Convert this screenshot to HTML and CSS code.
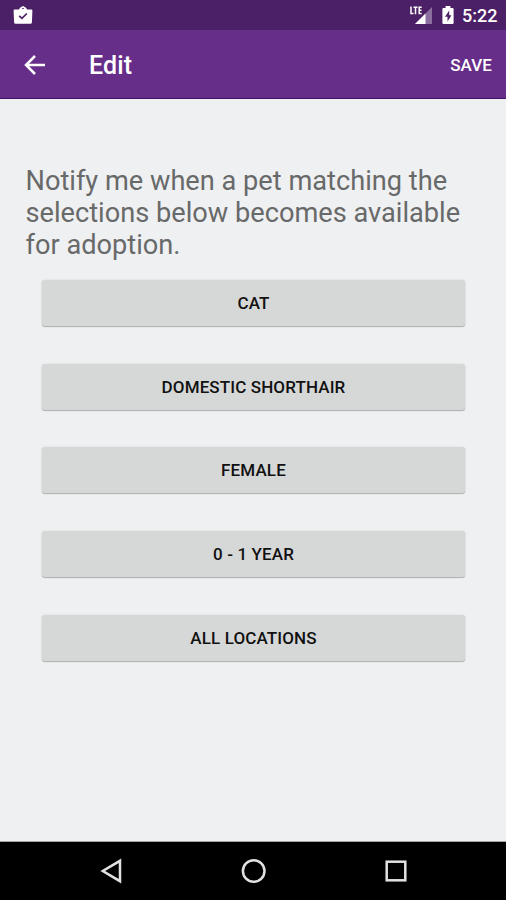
FILE: index.html
```html
<!DOCTYPE html>
<html lang="en">
<head>
<meta charset="utf-8">
<title>Edit</title>
<link rel="stylesheet" href="styles.css">
</head>
<body>
<div class="screen">
  <div class="status">
    <svg class="work" width="20" height="20" viewBox="0 0 20 20"><path fill="#fff" fill-rule="evenodd" d="M1.800 4.500h4.200L7 2.800 10 1l3 1.800 1 1.700h4.200a1.200 1.200 0 0 1 1.200 1.300l-.5 11.500a1.500 1.500 0 0 1-1.500 1.500H2.600a1.500 1.500 0 0 1-1.500-1.500L.6 5.800a1.200 1.200 0 0 1 1.200-1.300zM8.600 4h2.800L10 2.800z"/><path d="M6.200 10.800l2.700 2.600 5-4.900" fill="none" stroke="#4c2066" stroke-width="1.700"/></svg>
    <div class="indicators">
      <svg class="signal" width="24" height="20" viewBox="0 0 24 20"><path d="M22 2v17H5z" fill="#8d6f9f"/><path d="M15.500 8.500V19H5z" fill="#fff"/><path d="M1 1.500v7H3.500M3.500 2.200h4M5.500 2.200v7M11.700 2.200H9.200v6.300h2.500M9.200 5.300h2.300" fill="none" stroke="#fff" stroke-width="1.500"/></svg>
      <svg class="battery" width="12" height="20" viewBox="0 0 12 20"><path d="M3.600 1h4.800v2h2.200a1 1 0 0 1 1 1v14a1 1 0 0 1-1 1H1.400a1 1 0 0 1-1-1V4a1 1 0 0 1 1-1h2.200z" fill="#fff"/><path d="M7.200 5.500L3 11.800h2.500v4.700l4-6.300H7.200z" fill="#4c2066"/></svg>
      <span class="clock">5:22</span>
    </div>
  </div>
  <header class="appbar">
    <svg class="back" width="22" height="22" viewBox="0 0 22 22"><path d="M21 11H3M11 2l-9 9 9 9" fill="none" stroke="#fff" stroke-width="2.500"/></svg>
    <h1 class="title">Edit</h1>
    <span class="save">SAVE</span>
  </header>
  <main class="content">
    <p class="message">Notify me when a pet matching the selections below becomes available for adoption.</p>
    <div class="choices">
      <button class="choice">CAT</button>
      <button class="choice">DOMESTIC SHORTHAIR</button>
      <button class="choice">FEMALE</button>
      <button class="choice">0 - 1 YEAR</button>
      <button class="choice">ALL LOCATIONS</button>
    </div>
  </main>
  <nav class="navbar">
    <svg width="26" height="26" viewBox="0 0 26 26"><path d="M22 2.800v20.400L4.800 13z"/></svg>
    <svg width="26" height="26" viewBox="0 0 26 26"><circle cx="12.700" cy="13" r="10.800"/></svg>
    <svg width="26" height="26" viewBox="0 0 26 26"><rect x="3.700" y="3.700" width="18.600" height="18.600"/></svg>
  </nav>
</div>
</body>
</html>
```
FILE: styles.css
```css
* { box-sizing: border-box; }
body {
  margin: 0;
  font-family: Roboto, "Liberation Sans", sans-serif;
  background: #eff0f2;
}
.screen {
  width: 506px;
  height: 900px;
  display: flex;
  flex-direction: column;
  overflow: hidden;
}
.status {
  height: 30px;
  flex: none;
  display: flex;
  justify-content: space-between;
  padding: 5px 9px 0 13px;
  background: #4c2066;
}
.indicators { display: flex; }
.battery { margin-left: 8px; }
.clock {
  width: 35px;
  margin-left: 8px;
  font-size: 18px;
  line-height: 22px;
  font-weight: 500;
  color: #fff;
}
.appbar {
  height: 69px;
  flex: none;
  display: flex;
  align-items: center;
  padding: 1px 14px 0 24px;
  background: #662d89;
  border-bottom: 1px solid #431063;
  color: #fff;
}
.title {
  margin: 3px 0 0 43px;
  font-size: 25px;
  line-height: 30px;
  font-weight: 500;
  letter-spacing: 0.1px;
}
.save {
  margin-left: auto;
  font-size: 17px;
  line-height: 20px;
  font-weight: 500;
  letter-spacing: 0.1px;
}
.content {
  flex: 1;
  padding: 66px 26px 0;
}
.message {
  margin: 0 0 0 -0.500px;
  font-size: 27.200px;
  line-height: 32px;
  color: #686969;
}
.choices {
  display: flex;
  flex-direction: column;
  gap: 37.600px;
  padding: 19.200px 15px 0 16px;
}
.choice {
  height: 46px;
  padding: 0;
  border: 0;
  border-radius: 3px;
  background: #d6d8d7;
  box-shadow: 0 1px 1px #aeb0b0, 0 0 2px #d0d2d2;
  font: 500 17px Roboto, "Liberation Sans", sans-serif;
  letter-spacing: 0.120px;
  color: #111;
}
.navbar {
  height: 58px;
  flex: none;
  display: flex;
  justify-content: space-between;
  padding: 16px 97px 0 98px;
  background: #000;
  box-shadow: 0 -1px 0 #a5a6a5;
}
.navbar svg {
  fill: none;
  stroke: #e2e2e2;
  stroke-width: 2.500;
}
```
